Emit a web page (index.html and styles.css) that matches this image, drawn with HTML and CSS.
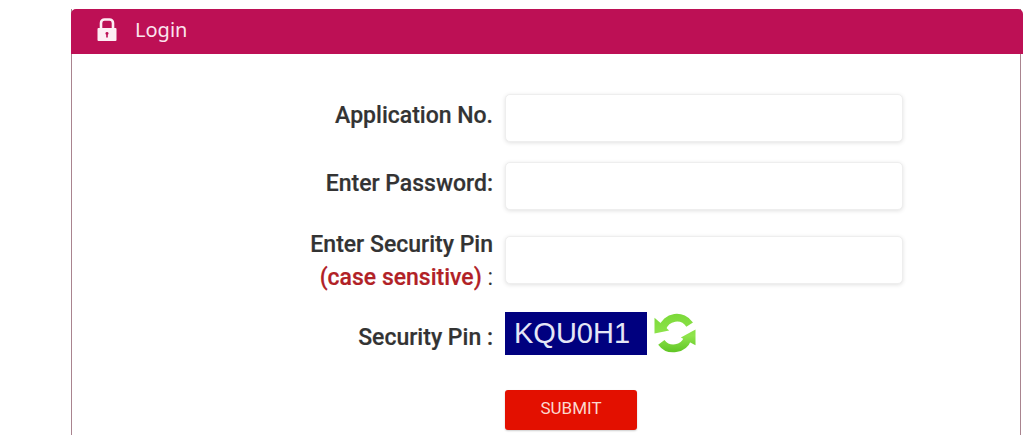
FILE: index.html
```html
<!DOCTYPE html>
<html lang="en">
<head>
<meta charset="utf-8">
<title>Login</title>
<link rel="stylesheet" href="styles.css">
</head>
<body>
<section class="panel">
  <header class="panel-head">
    <svg class="lock" viewBox="0 0 20 24" aria-hidden="true">
      <path class="lock-body" fill-rule="evenodd" d="M1.500 10h17a1 1 0 0 1 1 1v11a1 1 0 0 1-1 1h-17a1 1 0 0 1-1-1V11a1 1 0 0 1 1-1zM10 14a1.500 1.500 0 0 0-.8 2.800V19.500h1.600v-2.700A1.500 1.500 0 0 0 10 14z"/>
      <path class="lock-shackle" d="M4 10V5a3.500 3.500 0 0 1 3.500-3.500h5A3.500 3.500 0 0 1 16 5v5"/>
    </svg>
    <span class="panel-title">Login</span>
  </header>
  <form class="panel-body">
    <div class="row">
      <label class="label label-up">Application No.</label>
      <input class="field" type="text">
    </div>
    <div class="row">
      <label class="label label-up">Enter Password:</label>
      <input class="field" type="password">
    </div>
    <div class="row row-tall">
      <label class="label label-two">Enter Security Pin<br><span class="hint">(case sensitive)</span> <span class="colon">:</span></label>
      <input class="field" type="text">
    </div>
    <div class="row row-captcha">
      <label class="label label-down">Security Pin :</label>
      <div class="captcha">KQU0H1</div>
      <svg class="refresh" viewBox="0 0 44 44" aria-hidden="true">
        <defs>
          <linearGradient id="g" gradientUnits="userSpaceOnUse" x1="0" y1="0" x2="0" y2="44">
            <stop offset="0" stop-color="#7ad838"/>
            <stop offset="0.55" stop-color="#8fe44c"/>
            <stop offset="1" stop-color="#58c01e"/>
          </linearGradient>
        </defs>
        <path class="refresh-arc" d="M9 17A15.500 15.500 0 0 1 37 13"/>
        <path class="refresh-head" d="M1 6L1 22L16 19Z"/>
        <path class="refresh-arc" d="M35 27A15.500 15.500 0 0 1 8 31"/>
        <path class="refresh-head" d="M43 18L43 34L28 26Z"/>
      </svg>
    </div>
    <div class="row row-submit">
      <button class="submit" type="button">SUBMIT</button>
    </div>
  </form>
</section>
</body>
</html>
```
FILE: styles.css
```css
html, body {
  margin: 0;
  padding: 0;
  height: 435px;
  overflow: hidden;
  background: #fff;
  font-family: "Roboto", "Liberation Sans", sans-serif;
}

.panel {
  margin: 9px 0 0 71px;
  border-left: 1px solid #a9848f;
  border-right: 1px solid #a9848f;
  width: 950px;
  height: 426px;
  box-sizing: border-box;
}

.panel-head {
  display: flex;
  align-items: center;
  box-sizing: border-box;
  height: 45px;
  margin: 0 -3px 0 -1px;
  padding: 0 0 4px 26px;
  background: #bd1055;
  border-radius: 5px 5px 0 0;
  color: #fbe4ee;
}

.lock {
  width: 20px;
  height: 24px;
}

.lock-body { fill: #fdeef4; }

.lock-shackle {
  fill: none;
  stroke: #fdeef4;
  stroke-width: 2.6;
}

.panel-title {
  margin-left: 18px;
  font-family: "Noto Sans", "Roboto", sans-serif;
  font-size: 20px;
}

.panel-body {
  padding-top: 40px;
}

.row {
  display: flex;
  align-items: center;
  margin-bottom: 20px;
}

.row-tall {
  margin-top: -3px;
  margin-bottom: 19px;
}

.row-captcha {
  margin-bottom: 35px;
}

.label {
  width: 421px;
  margin-right: 12px;
  flex: none;
  text-align: right;
  font-size: 23px;
  font-weight: 500;
  color: #333;
  -webkit-text-stroke: 0.2px #333;
}

.label-up {
  padding-bottom: 6px;
}

.label-down {
  padding-top: 8px;
}

.label-two {
  padding-top: 1px;
  margin-bottom: -1px;
  line-height: 33px;
}

.hint {
  color: #b12126;
  -webkit-text-stroke: 0.2px #b12126;
}

.colon {
  font-weight: 400;
  -webkit-text-stroke: 0;
}

.field {
  width: 398px;
  height: 48px;
  box-sizing: border-box;
  padding: 0 12px;
  border: 1px solid #eee;
  border-radius: 5px;
  background: #fff;
  box-shadow: 0 1px 4px rgba(0, 0, 0, 0.12);
  outline: none;
}

.captcha {
  width: 142px;
  height: 43px;
  box-sizing: border-box;
  padding-left: 9px;
  background: #00007f;
  color: #e4e6f6;
  font-family: "Liberation Sans", Arial, sans-serif;
  font-size: 29px;
  line-height: 43px;
}

.refresh {
  width: 44px;
  height: 43px;
  margin-left: 6px;
}

.refresh-arc {
  fill: none;
  stroke: url(#g);
  stroke-width: 8;
}

.refresh-head {
  fill: url(#g);
}

.row-submit {
  margin-left: 433px;
}

.submit {
  width: 132px;
  height: 40px;
  padding: 0 0 5px;
  border: none;
  border-radius: 3px;
  background: #e31000;
  color: #fbd9cf;
  font-family: "Roboto", sans-serif;
  font-size: 17px;
  box-shadow: 0 1px 2px rgba(0, 0, 0, 0.2);
}
```
